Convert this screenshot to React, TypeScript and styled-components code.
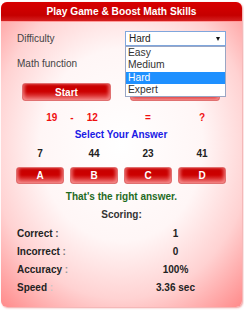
import React from "react";
import styled, { createGlobalStyle } from "styled-components";

const Global = createGlobalStyle`
  html, body { margin: 0; padding: 0; background: #fff; }
  body { font-family: "Liberation Sans", Arial, sans-serif; }
`;

const Page = styled.div`
  padding: 2px 2px 3px 1px;
  width: 244px;
  box-sizing: border-box;
`;

const Card = styled.div`
  position: relative;
  width: 241px;
  height: 305px;
  box-sizing: border-box;
  border-radius: 6px;
  background: radial-gradient(ellipse 75% 70% at 50% 47%, #ffffff 0%, #fff6f6 45%, #ffd2d2 72%, #ff8c8c 100%);
  box-shadow: 1px 1px 2px rgba(220, 40, 40, 0.45);
  display: flex;
  flex-direction: column;
`;

const Header = styled.div`
  height: 20px;
  border-radius: 6px 6px 0 0;
  background: linear-gradient(#d80000, #c60000 70%, #d42020);
  border-bottom: 1px solid #ff9a9a;
  box-sizing: border-box;
  color: #fff;
  font-weight: bold;
  font-size: 10.2px;
  line-height: 19px;
  text-align: center;
`;

const Form = styled.div`
  display: grid;
  grid-template-columns: 108px 101px;
  row-gap: 10px;
  padding: 9px 0 0 16px;
  align-items: center;
`;

const Label = styled.div`
  font-size: 10px;
  color: #444;
`;

const SelectWrap = styled.div`
  position: relative;
`;

const SelectBox = styled.div<{ $focused?: boolean }>`
  height: 15px;
  box-sizing: border-box;
  border: 1px solid ${(p) => (p.$focused ? "#7fa6dc" : "#aaa")};
  background: #fff;
  font-size: 10px;
  line-height: 13px;
  color: #222;
  padding-left: 3px;
  display: flex;
  justify-content: space-between;
  align-items: center;
`;

const Arrow = styled.span`
  width: 0;
  height: 0;
  margin-left: auto;
  margin-right: 5px;
  border-left: 2.5px solid transparent;
  border-right: 2.5px solid transparent;
  border-top: 4px solid #111;
`;

const Menu = styled.div`
  position: absolute;
  top: 15px;
  left: 0;
  width: 101px;
  box-sizing: border-box;
  border: 1px solid #9aa6c4;
  background: #fff;
  z-index: 10;
`;

const Option = styled.div<{ $selected?: boolean }>`
  height: 12.3px;
  line-height: 12.3px;
  font-size: 10.3px;
  padding-left: 2px;
  color: ${(p) => (p.$selected ? "#fff" : "#333")};
  background: ${(p) => (p.$selected ? "#1e90ff" : "#fff")};
`;

const ButtonRow = styled.div`
  display: grid;
  grid-template-columns: 89px 90px;
  column-gap: 19px;
  padding: 0 0 0 21px;
  margin-top: 12px;
`;

const RedButton = styled.div<{ $h?: number }>`
  height: ${(p) => p.$h ?? 18}px;
  box-sizing: border-box;
  border-radius: 3px;
  border: 1px solid #e07070;
  background: linear-gradient(#c80000, #cc0000 45%, #e03a3a 100%);
  box-shadow: inset 0 -3px 5px rgba(255, 180, 180, 0.55), inset 2px 0 3px rgba(255, 160, 160, 0.35), inset -2px 0 3px rgba(255, 160, 160, 0.35);
  color: #fff;
  font-weight: bold;
  font-size: 10px;
  display: flex;
  align-items: center;
  justify-content: center;
`;

const Quad = styled.div`
  display: grid;
  grid-template-columns: repeat(4, 48px);
  column-gap: 6px;
  padding-left: 15px;
  justify-items: center;
`;

const Equation = styled(Quad)`
  margin-top: 11px;
  height: 12px;
  line-height: 12px;
  color: #f01010;
  font-weight: bold;
  font-size: 10px;
`;

const Expr = styled.div`
  grid-column: 1 / span 2;
  display: flex;
  gap: 13px;
  padding-left: 10px;
`;

const Prompt = styled.div`
  margin-top: 5px;
  text-align: center;
  line-height: 12px;
  font-size: 10px;
  font-weight: bold;
  color: #1a1ae6;
  padding-right: 1px;
`;

const Answers = styled(Quad)`
  margin-top: 7px;
  line-height: 12px;
  font-size: 10px;
  font-weight: bold;
  color: #222;
`;

const Choices = styled(Quad)`
  margin-top: 7px;
  & > div { width: 48px; }
`;

const Feedback = styled.div`
  margin-top: 7px;
  text-align: center;
  line-height: 12px;
  font-size: 10px;
  font-weight: bold;
  color: #1f6b1f;
`;

const Title = styled.div`
  margin-top: 6px;
  text-align: center;
  line-height: 12px;
  font-size: 10px;
  font-weight: bold;
  color: #333;
`;

const Scores = styled.div`
  margin-top: 4px;
  display: grid;
  grid-template-columns: 108px 101px;
  padding-left: 16px;
  line-height: 18px;
  font-size: 10px;
  font-weight: bold;
  color: #222;
`;

const ScoreValue = styled.div`
  text-align: center;
`;

const Colon = styled.span<{ $c: string }>`
  color: ${(p) => p.$c};
`;

const scores = [
  { label: "Correct", value: "1", colon: "#555" },
  { label: "Incorrect", value: "0", colon: "#777" },
  { label: "Accuracy", value: "100%", colon: "#999" },
  { label: "Speed", value: "3.36 sec", colon: "#c8c8c8" },
];

export default function App() {
  return (
    <>
      <Global />
      <Page>
        <Card>
          <Header>Play Game &amp; Boost Math Skills</Header>
          <Form>
            <Label>Difficulty</Label>
            <SelectWrap>
              <SelectBox $focused>
                <span>Hard</span>
                <Arrow />
              </SelectBox>
              <Menu>
                <Option>Easy</Option>
                <Option>Medium</Option>
                <Option $selected>Hard</Option>
                <Option>Expert</Option>
              </Menu>
            </SelectWrap>
            <Label>Math function</Label>
            <SelectWrap>
              <SelectBox>
                <Arrow />
              </SelectBox>
            </SelectWrap>
          </Form>
          <ButtonRow>
            <RedButton>Start</RedButton>
            <RedButton />
          </ButtonRow>
          <Equation>
            <Expr>
              <span>19</span>
              <span>-</span>
              <span>12</span>
            </Expr>
            <span>=</span>
            <span>?</span>
          </Equation>
          <Prompt>Select Your Answer</Prompt>
          <Answers>
            <span>7</span>
            <span>44</span>
            <span>23</span>
            <span>41</span>
          </Answers>
          <Choices>
            <RedButton $h={17}>A</RedButton>
            <RedButton $h={17}>B</RedButton>
            <RedButton $h={17}>C</RedButton>
            <RedButton $h={17}>D</RedButton>
          </Choices>
          <Feedback>That's the right answer.</Feedback>
          <Title>Scoring:</Title>
          <Scores>
            {scores.map((s) => (
              <React.Fragment key={s.label}>
                <div>
                  {s.label} <Colon $c={s.colon}>:</Colon>
                </div>
                <ScoreValue>{s.value}</ScoreValue>
              </React.Fragment>
            ))}
          </Scores>
        </Card>
      </Page>
    </>
  );
}
